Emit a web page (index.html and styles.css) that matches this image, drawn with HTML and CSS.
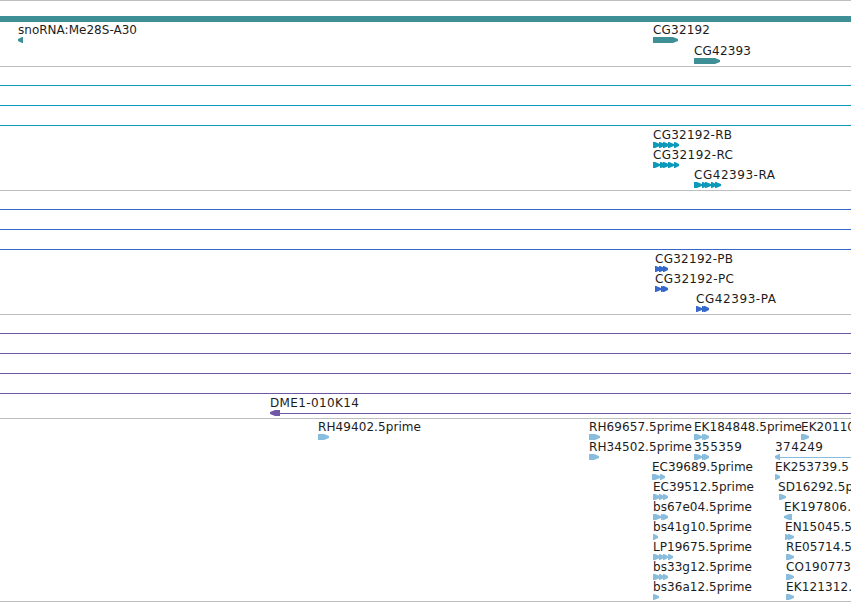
FILE: index.html
```html
<!DOCTYPE html>
<html lang="en">
<head>
    <meta charset="UTF-8">
    <meta name="viewport" content="width=device-width, initial-scale=1.0">
    <title>Genome Tracks</title>
    <link rel="stylesheet" href="styles.css">
</head>
<body>
    <div class="browser" id="browser"></div>
    <script src="tracks.js"></script>
</body>
</html>
```
FILE: styles.css
```css
* {
    margin: 0;
    padding: 0;
    box-sizing: border-box;
}
body {
    background-color: #fff;
    overflow: hidden;
}
.browser {
    border-top: 1px solid #bebebe;
    overflow: hidden;
}
.track {
    border-bottom: 1px solid #bebebe;
    padding: 18px 0 3px;
}
.gene {
    color: #3f9096;
    padding: 15px 0 2px;
}
.transcript {
    color: #0d9aba;
}
.protein {
    color: #3568ca;
}
.clone {
    color: #7157a8;
}
.est {
    color: #88bddd;
    padding: 0 0 2px;
}
.bar {
    height: 6px;
    background-color: currentColor;
}
.line {
    height: 20px;
    border-top: 1px solid currentColor;
}
.line.last {
    height: 2px;
}
.row {
    display: grid;
    height: 20px;
}
.gene .row {
    height: 21px;
}
.feature {
    display: block;
    grid-area: 1 / 1;
    height: 21px;
    overflow: visible;
}
.feature text {
    font-family: "DejaVu Sans", sans-serif;
    font-size: 12px;
    fill: #1c1c1c;
}
.feature path {
    fill: currentColor;
}
```
FILE: tracks.js
```js
// feature: [x, label, label width, glyphs]
// glyph: [offset, width, direction], direction 1 = forward, -1 = reverse, 0 = line
const tracks = [
    {
        type: 'gene', bar: true, lines: 0, rows: [
            [[18, 'snoRNA:Me28S-A30', 119, [[0, 5, -1]]], [653, 'CG32192', 57, [[0, 25, 1]]]],
            [[694, 'CG42393', 57, [[0, 26, 1]]]]
        ]
    },
    {
        type: 'transcript', lines: 3, rows: [
            [[653, 'CG32192-RB', 79, [[0, 7, 1], [6, 6, 1], [10, 6, 1], [15, 6, 1], [21, 5, 1]]]],
            [[653, 'CG32192-RC', 80, [[0, 7, 1], [7, 6, 1], [10, 6, 1], [15, 6, 1], [21, 5, 1]]]],
            [[694, 'CG42393-RA', 81, [[0, 8, 1], [8, 5, 1], [11, 6, 1], [17, 5, 1], [21, 6, 1]]]]
        ]
    },
    {
        type: 'protein', lines: 3, rows: [
            [[655, 'CG32192-PB', 78, [[0, 6, 1], [4, 6, 1], [8, 5, 1]]]],
            [[655, 'CG32192-PC', 79, [[0, 6, 1], [6, 5, 1], [8, 5, 1]]]],
            [[696, 'CG42393-PA', 80, [[0, 6, 1], [6, 5, 1], [8, 5, 1]]]]
        ]
    },
    {
        type: 'clone', lines: 4, rows: [
            [[270, 'DME1-010K14', 89, [[0, 10, -1], [10, 571, 0]]]]
        ]
    },
    {
        type: 'est', lines: 0, rows: [
            [
                [318, 'RH49402.5prime', 103, [[0, 11, 1]]],
                [589, 'RH69657.5prime', 103, [[0, 11, 1]]],
                [694, 'EK184848.5prime', 108, [[0, 8, 1], [8, 4, 1], [10, 5, 1]]],
                [801, 'EK20110', 54, [[0, 8, 1]]]
            ],
            [
                [589, 'RH34502.5prime', 103, [[0, 10, 1]]],
                [694, '355359', 48, [[0, 8, 1], [8, 4, 1], [10, 5, 1]]],
                [775, '374249', 48, [[0, 5, -1], [5, 71, 0]]]
            ],
            [[652, 'EC39689.5prime', 101, [[0, 8, 1], [8, 5, 1]]], [775, 'EK253739.5', 74, [[0, 5, 1]]]],
            [[653, 'EC39512.5prime', 101, [[0, 7, 1], [6, 5, 1], [10, 5, 1]]], [778, 'SD16292.5p', 75, [[1, 7, 1]]]],
            [[653, 'bs67e04.5prime', 99, [[0, 8, 1], [8, 4, 1], [10, 5, 1]]], [784, 'EK197806.', 67, [[0, 8, -1]]]],
            [[653, 'bs41g10.5prime', 99, [[0, 5, 1]]], [785, 'EN15045.5', 67, [[0, 5, 1], [3, 6, 1]]]],
            [[653, 'LP19675.5prime', 99, [[0, 7, 1], [6, 5, 1], [10, 5, 1], [15, 5, 1]]], [786, 'RE05714.5', 66, [[0, 8, 1]]]],
            [[653, 'bs33g12.5prime', 99, [[0, 7, 1], [6, 5, 1], [10, 5, 1]]], [786, 'CO190773', 65, [[0, 8, 1]]]],
            [[653, 'bs36a12.5prime', 99, [[0, 6, 1]]], [786, 'EK121312.', 66, [[0, 8, 1]]]]
        ]
    }
];

function glyphPath([x, w, dir]) {
    if (dir === 0) {
        return `M${x} 18h${w}v1h${-w}z`;
    }
    const tip = Math.min(w, 6);
    if (dir === 1) {
        return `M${x} 15h${w - tip + 1}l${tip - 1} 2v2l${1 - tip} 2h${tip - w - 1}z`;
    }
    return `M${x + w} 15v6h${tip - w - 1}l${1 - tip} -2v-2l${tip - 1} -2z`;
}

function drawFeature([x, label, width, glyphs]) {
    return `<svg class="feature" width="${width}" style="margin-left: ${x}px">
        <text x="0" y="12" textLength="${width}">${label}</text>
        ${glyphs.map(g => `<path d="${glyphPath(g)}"/>`).join('')}
    </svg>`;
}

document.getElementById('browser').innerHTML = tracks.map(track => {
    let html = track.bar ? '<div class="bar"></div>' : '';
    for (let i = 1; i <= track.lines; i++) {
        html += `<div class="line${i === track.lines ? ' last' : ''}"></div>`;
    }
    html += track.rows.map(row => `<div class="row">${row.map(drawFeature).join('')}</div>`).join('');
    return `<div class="track ${track.type}">${html}</div>`;
}).join('');
```
